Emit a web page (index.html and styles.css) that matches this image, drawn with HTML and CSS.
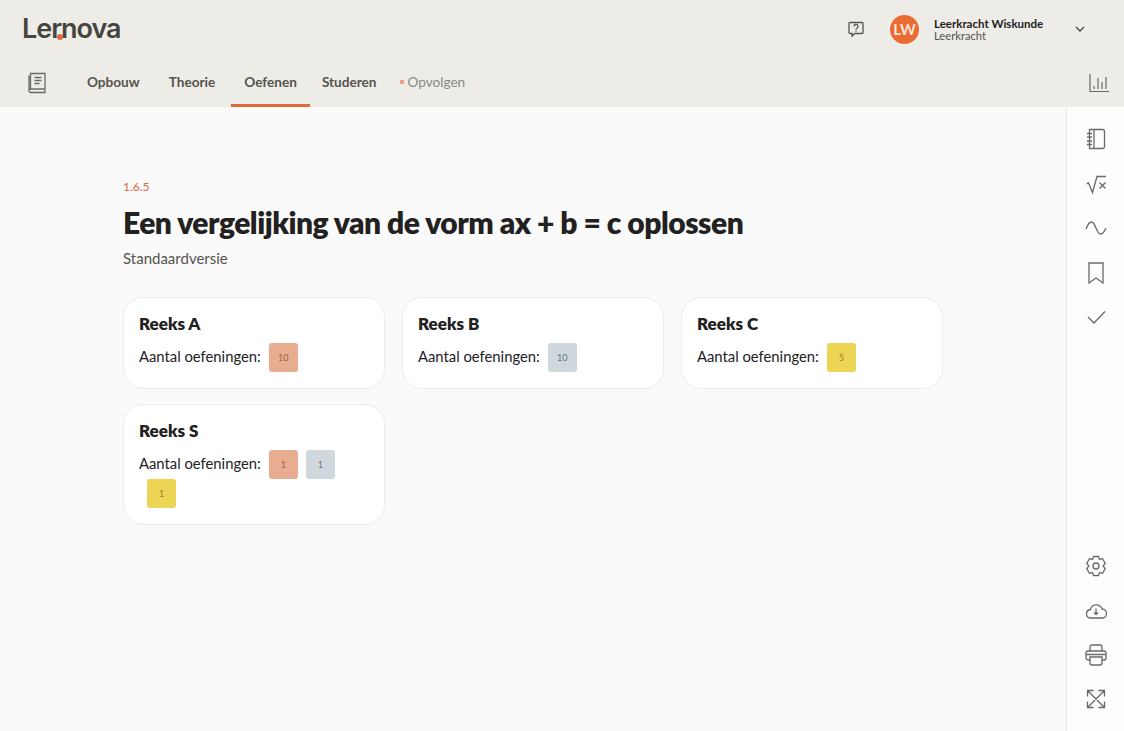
FILE: index.html
```html
<!DOCTYPE html>
<html lang="nl">
  <head>
    <meta charset="UTF-8" />
    <meta name="viewport" content="width=device-width, initial-scale=1.0" />
    <title>Lernova</title>
    <link rel="stylesheet" href="styles.css">
  </head>
  <body>
    <header class="top">
      <div class="top-bar">
        <div class="logo">Ler<span class="logo-n">n</span>ova</div>
        <div class="user">
          <svg class="help" width="18" height="18" viewBox="0 0 18 18" fill="none" stroke="#55534f" stroke-width="1.3">
            <path d="M3 2.500h12a1 1 0 0 1 1 1v9a1 1 0 0 1-1 1h-7l-3 2.500v-2.500H3a1 1 0 0 1-1-1v-9a1 1 0 0 1 1-1z" />
            <path d="M7 6.500a2 2 0 1 1 3 1.700c-.7.400-1 .7-1 1.500M9 10.800v1" />
          </svg>
          <div class="avatar">LW</div>
          <div class="user-text">
            <div class="user-name">Leerkracht Wiskunde</div>
            <div class="user-role">Leerkracht</div>
          </div>
          <svg class="chevron" width="12" height="8" viewBox="0 0 12 8" fill="none" stroke="#444" stroke-width="1.3">
            <path d="M2 2l4 4 4-4" />
          </svg>
        </div>
      </div>
      <div class="nav-bar">
        <svg class="book" width="20" height="22" viewBox="0 0 20 22" fill="none" stroke="#6b6965" stroke-width="1.3">
          <path d="M3.500 17V1.500H18V17H3.500a1.800 1.800 0 0 0-1.500 1.700V3.500M2 18.700a2 2 0 0 0 1.500 1.800H18V17" />
          <path d="M7.500 5.500h7M7.500 8.500h7M7.500 11.500h5" />
        </svg>
        <nav>
          <ul class="tabs">
            <li><a href="">Opbouw</a></li>
            <li><a href="">Theorie</a></li>
            <li><a href="" class="active">Oefenen</a></li>
            <li><a href="" class="studeren">Studeren</a></li>
            <li><a href="" class="muted">Opvolgen</a></li>
          </ul>
        </nav>
        <svg class="chart" width="20" height="20" viewBox="0 0 20 20" fill="none" stroke="#6b6965" stroke-width="1.200">
          <path d="M1 1v17.500h19M5 16v-3M9 16V5M13 16V9M17 16V4" />
        </svg>
      </div>
    </header>

    <div class="page">
      <main class="content">
        <div class="crumb">1.6.5</div>
        <h1>Een vergelijking van de vorm ax + b = c oplossen</h1>
        <p class="version">Standaardversie</p>
        <div class="cards">
          <div class="card">
            <h3>Reeks A</h3>
            <div class="count">
              <span class="count-label">Aantal oefeningen:</span>
              <span class="badge orange">10</span>
            </div>
          </div>
          <div class="card">
            <h3>Reeks B</h3>
            <div class="count">
              <span class="count-label">Aantal oefeningen:</span>
              <span class="badge grey">10</span>
            </div>
          </div>
          <div class="card">
            <h3>Reeks C</h3>
            <div class="count">
              <span class="count-label">Aantal oefeningen:</span>
              <span class="badge yellow">5</span>
            </div>
          </div>
          <div class="card">
            <h3>Reeks S</h3>
            <div class="count">
              <span class="count-label">Aantal oefeningen:</span>
              <span class="badge orange">1</span>
              <span class="badge grey">1</span>
              <span class="badge yellow">1</span>
            </div>
          </div>
        </div>
      </main>

      <aside class="side">
        <div class="side-group">
          <svg width="24" height="24" viewBox="0 0 24 24">
            <path d="M5.500 2.500h13a2 2 0 0 1 2 2v15a2 2 0 0 1-2 2h-13zM10 2.500v19M3 6.500h5M3 10h5M3 14h5M3 17.500h5" />
          </svg>
          <svg width="24" height="24" viewBox="0 0 24 24">
            <path d="M2.500 12l2-1 4 9.500L13 4.500h9M15.500 10.500l6 6M21.500 10.500l-6 6" />
          </svg>
          <svg width="24" height="24" viewBox="0 0 24 24">
            <path d="M2 13c1.500-4 3.500-7 5.500-7 4 0 5 12 9 12 2 0 4-2.500 5.500-6" />
          </svg>
          <svg width="24" height="24" viewBox="0 0 24 24">
            <path d="M5 2h14v20l-7-5-7 5z" />
          </svg>
          <svg width="24" height="24" viewBox="0 0 24 24">
            <path d="M4 12l6 6L21 6.500" />
          </svg>
        </div>
        <div class="side-group">
          <svg width="24" height="24" viewBox="0 0 24 24">
            <path d="M9.500 2.500h5l1 3 3-.8 2.800 4.800-2.300 2.500 2.300 2.500-2.800 4.800-3-.8-1 3h-5l-1-3-3 .8-2.800-4.800L5 12 2.700 9.500l2.800-4.800 3 .8z" />
            <circle cx="12" cy="12" r="3" />
          </svg>
          <svg width="24" height="24" viewBox="0 0 24 24">
            <path d="M6 20a3.800 3.800 0 0 1-3.500-4A4.500 4.500 0 0 1 6.500 11.500a6 6 0 0 1 11.500-.5A4.500 4.500 0 0 1 18 20zM12 10.500v6M10 14.500l2 2 2-2" />
          </svg>
          <svg width="24" height="24" viewBox="0 0 24 24">
            <path d="M6 8V4a2 2 0 0 1 2-2h8a2 2 0 0 1 2 2v4M6 17H4a2 2 0 0 1-2-2v-5a2 2 0 0 1 2-2h16a2 2 0 0 1 2 2v5a2 2 0 0 1-2 2h-2M6 14h12v6a2 2 0 0 1-2 2H8a2 2 0 0 1-2-2zM2 11.500h20" />
          </svg>
          <svg width="24" height="24" viewBox="0 0 24 24">
            <path d="M4 4l16 16M20 4L4 20M3.500 9.500v-6h6M14.500 3.500h6v6M3.500 14.500v6h6M14.500 20.500h6v-6" />
          </svg>
        </div>
      </aside>
    </div>
  </body>
</html>
```

FILE: styles.css
```css
:root {
  --top-bg: #eeece7;
  --accent: #e0693a;
  --text-dark: #22211f;
  --text-mid: #55534f;
}
* {
  box-sizing: border-box;
}
html,
body {
  height: 100%;
}
body {
  margin: 0;
  background-color: #fafafa;
  color: var(--text-dark);
  font-family: Lato, "Open Sans", sans-serif;
  display: flex;
  flex-direction: column;
  overflow: hidden;
}

/* header */
.top {
  background-color: var(--top-bg);
  height: 107px;
  flex: none;
}
.top-bar {
  height: 58px;
  display: flex;
  justify-content: space-between;
  align-items: center;
  padding: 0 38px 0 22px;
}
.logo {
  font-family: Inter, sans-serif;
  font-size: 27px;
  font-weight: 600;
  letter-spacing: -1px;
  color: #45443f;
  position: relative;
  top: -1px;
}
.logo-n {
  position: relative;
}
.logo-n::before {
  content: "";
  position: absolute;
  left: -4px;
  bottom: 5px;
  width: 6px;
  height: 6px;
  border-radius: 50%;
  background-color: var(--accent);
}
.user {
  display: flex;
  align-items: center;
}
.help {
  margin-right: 25px;
}
.avatar {
  width: 29px;
  height: 29px;
  border-radius: 50%;
  background-color: #ea6c35;
  color: #f8e3d6;
  font-size: 15px;
  font-weight: 700;
  display: grid;
  place-content: center;
  margin-right: 15px;
}
.user-text {
  font-size: 11.500px;
  line-height: 13px;
  padding-top: 1px;
  width: 109px;
  margin-right: 31px;
}
.user-name {
  font-weight: 700;
  white-space: nowrap;
}
.user-role {
  color: var(--text-mid);
  font-size: 11.200px;
  line-height: 12px;
}
.nav-bar {
  height: 49px;
  display: flex;
  align-items: center;
  padding: 0 15px 0 27px;
}
.book {
  margin-right: 27px;
}
.tabs {
  list-style: none;
  display: flex;
  margin: 0;
  padding: 0;
  font-size: 13.600px;
  font-weight: 700;
}
.tabs a {
  display: block;
  height: 49px;
  line-height: 48px;
  padding: 0 13px;
  margin-right: 3px;
  color: var(--text-mid);
  text-decoration: none;
}
.tabs a.active {
  border-bottom: 3px solid var(--accent);
}
.tabs a.studeren {
  padding-left: 9px;
}
.tabs a.muted {
  font-weight: 400;
  color: #8b8985;
  position: relative;
  padding-left: 15px;
}
.tabs a.muted::before {
  content: "";
  position: absolute;
  left: 7px;
  top: 22px;
  width: 4px;
  height: 4px;
  background-color: #e8a27f;
}
.chart {
  margin-left: auto;
}

/* main area */
.page {
  flex: 1;
  display: flex;
  min-height: 0;
}
.content {
  flex: 1;
  padding: 72px 0 0 123px;
}
.crumb {
  color: var(--accent);
  font-size: 12px;
  line-height: 16px;
}
h1 {
  margin: 6px 0 0;
  font-size: 30px;
  line-height: 42px;
  font-weight: 800;
  letter-spacing: -0.5px;
}
.version {
  margin: 3px 0 0;
  font-size: 15px;
  line-height: 24px;
  color: var(--text-mid);
}
.cards {
  display: grid;
  grid-template-columns: repeat(3, 262px);
  gap: 15px 17px;
  margin-top: 27px;
  align-items: start;
}
.card {
  background-color: #fff;
  border: 1px solid var(--top-bg);
  border-radius: 20px;
  padding: 15px 15px 16px;
}
.card h3 {
  margin: 0 0 8px;
  font-size: 17px;
  line-height: 22px;
  font-weight: 800;
}
.count {
  display: flex;
  flex-wrap: wrap;
  align-items: center;
  font-size: 14.800px;
}
.count-label {
  padding-bottom: 3px;
}
.badge {
  width: 29px;
  height: 29px;
  margin-left: 8px;
  border-radius: 3px;
  display: grid;
  place-content: center;
  font-size: 9px;
}
.orange {
  background-color: #e8ad90;
  color: #a0623f;
}
.grey {
  background-color: #d0d8dd;
  color: #6e7478;
}
.yellow {
  background-color: #ecd455;
  color: #94812a;
}

/* right column */
.side {
  width: 58px;
  flex: none;
  background-color: #fdfdfd;
  border-left: 1px solid #e8e6e1;
  display: flex;
  flex-direction: column;
  justify-content: space-between;
  align-items: center;
  padding: 20px 0 20px;
}
.side-group {
  display: flex;
  flex-direction: column;
  gap: 20.500px;
}
.side svg {
  display: block;
  fill: none;
  stroke: #6b6965;
  stroke-width: 1.300;
}
```
